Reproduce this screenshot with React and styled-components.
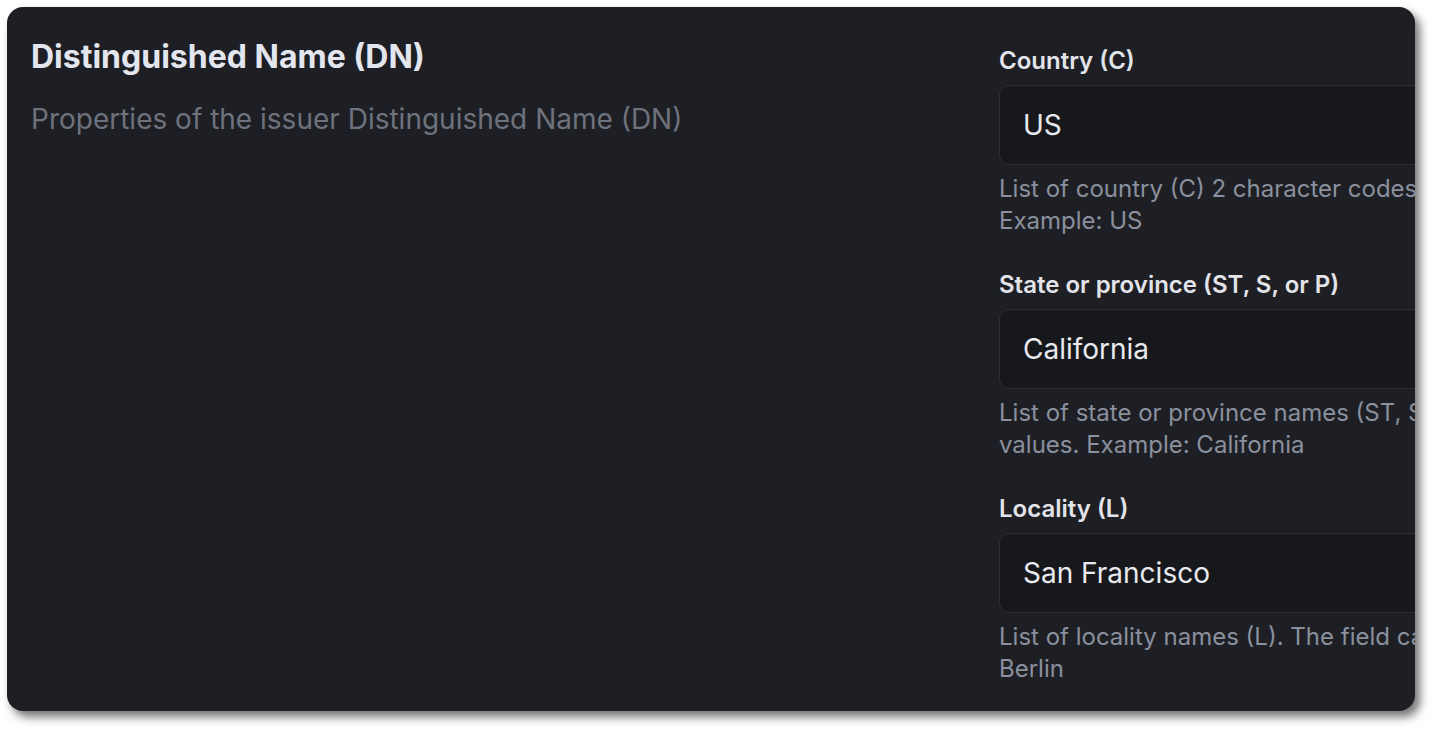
import React from "react";
import styled, { createGlobalStyle } from "styled-components";

const GlobalStyle = createGlobalStyle`
  html, body { margin: 0; padding: 0; background: #ffffff; }
  body { font-family: Inter, "Noto Sans", sans-serif; -webkit-font-smoothing: antialiased; }
  * { box-sizing: border-box; }
`;

const Page = styled.div`
  padding: 7px;
  height: 734px;
`;

const Card = styled.section`
  width: 1408px;
  height: 704px;
  background: #1e1f24;
  border-radius: 16px;
  box-shadow: 5px 6px 10px rgba(0, 0, 0, 0.55);
  overflow: hidden;
  padding: 26px 24px 24px;
  display: grid;
  grid-template-columns: 944px 880px;
  column-gap: 24px;
  align-items: start;
`;

const Intro = styled.div`
  display: flex;
  flex-direction: column;
`;

const Title = styled.h2`
  margin: 0;
  font-size: 32px;
  line-height: 48px;
  font-weight: 700;
  color: #e3e6ee;
`;

const Subtitle = styled.p`
  margin: 18px 0 0;
  font-size: 28px;
  line-height: 40px;
  font-weight: 400;
  color: #6e727d;
`;

const Fields = styled.div`
  margin-top: 12px;
  display: flex;
  flex-direction: column;
  gap: 32px;
`;

const Field = styled.div`
  display: flex;
  flex-direction: column;
`;

const Label = styled.label`
  font-size: 24px;
  line-height: 32px;
  font-weight: 600;
  color: #e2e4ea;
`;

const Input = styled.input`
  margin-top: 8px;
  width: 100%;
  height: 80px;
  padding: 0 23px;
  background: #17181c;
  border: 1px solid #2e2f35;
  border-radius: 10px;
  color: #e8eaef;
  font-family: Inter, "Noto Sans", sans-serif;
  font-size: 28px;
  outline: none;
`;

const Help = styled.p`
  margin: 8px 0 0;
  font-size: 24px;
  line-height: 32px;
  color: #8a909d;
`;

const fields = [
  {
    label: "Country (C)",
    value: "US",
    help: "List of country (C) 2 character codes. The field can contain multiple values. Example: US",
  },
  {
    label: "State or province (ST, S, or P)",
    value: "California",
    help: "List of state or province names (ST, S, or P). The field can contain multiple values. Example: California",
  },
  {
    label: "Locality (L)",
    value: "San Francisco",
    help: "List of locality names (L). The field can contain multiple values. Example: Berlin",
  },
];

export default function App() {
  return (
    <>
      <GlobalStyle />
      <Page>
        <Card>
          <Intro>
            <Title>Distinguished Name (DN)</Title>
            <Subtitle>Properties of the issuer Distinguished Name (DN)</Subtitle>
          </Intro>
          <Fields>
            {fields.map((f) => (
              <Field key={f.label}>
                <Label>{f.label}</Label>
                <Input defaultValue={f.value} />
                <Help>{f.help}</Help>
              </Field>
            ))}
          </Fields>
        </Card>
      </Page>
    </>
  );
}
